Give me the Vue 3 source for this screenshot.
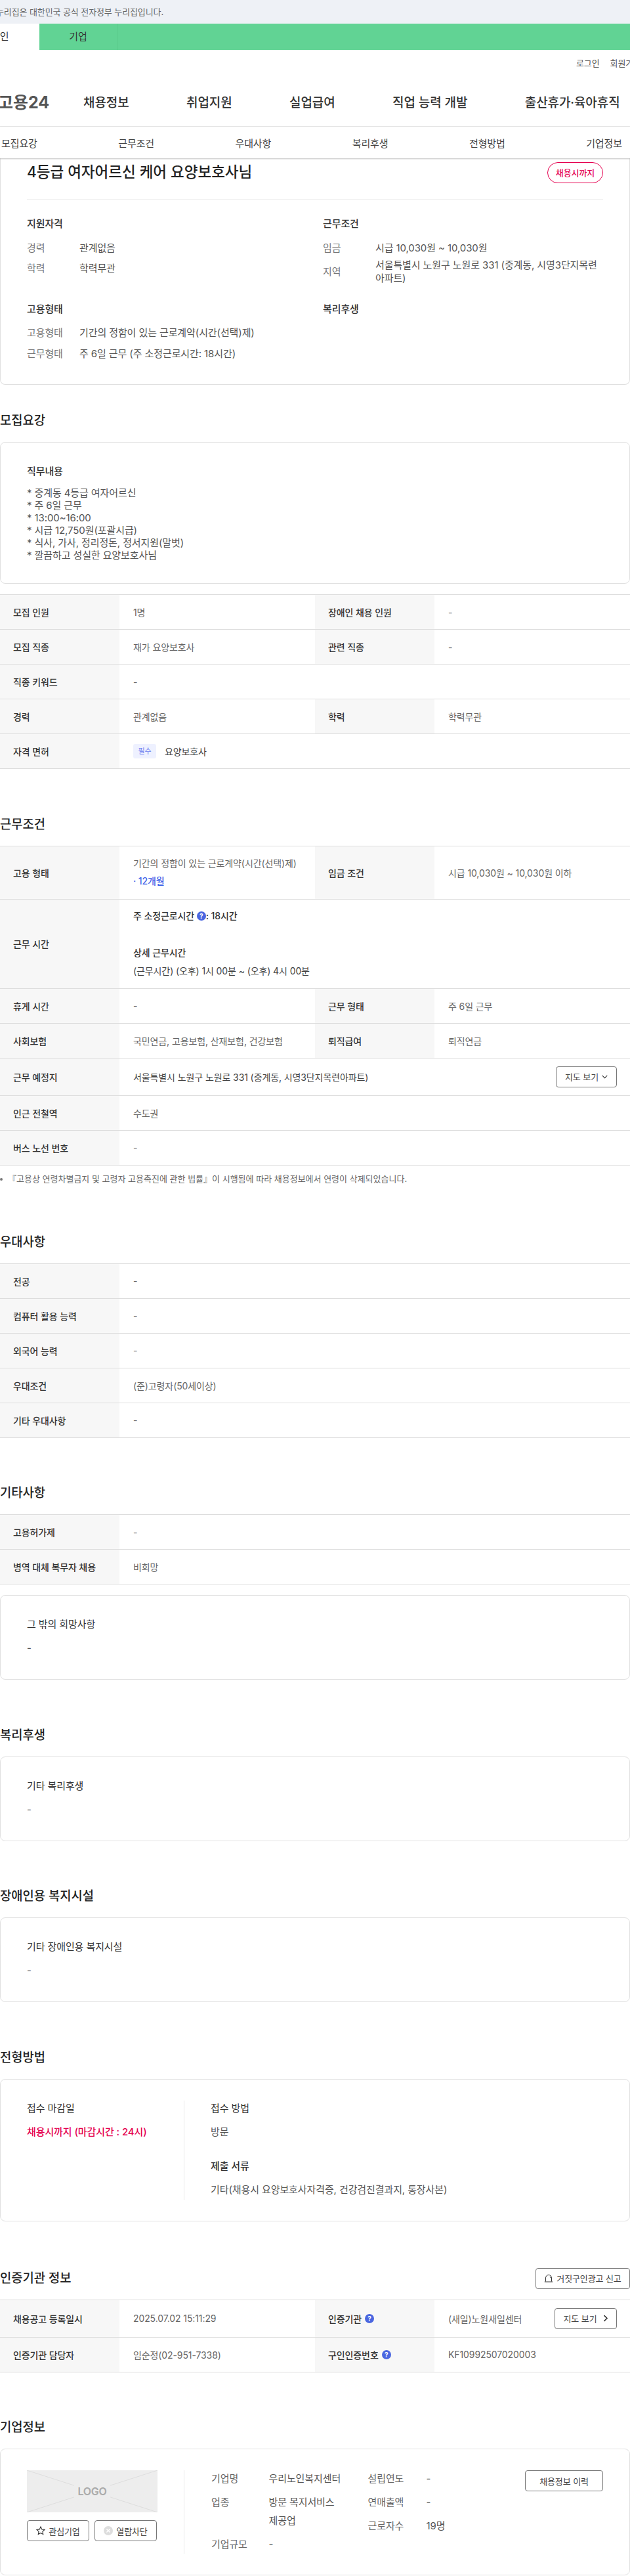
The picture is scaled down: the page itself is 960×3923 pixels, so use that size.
<script setup>
const recruitRows = [
  [{ k: '모집 인원', v: '1명' }, { k: '장애인 채용 인원', v: '-' }],
  [{ k: '모집 직종', v: '재가 요양보호사' }, { k: '관련 직종', v: '-' }],
  [{ k: '직종 키워드', v: '-' }],
  [{ k: '경력', v: '관계없음' }, { k: '학력', v: '학력무관' }]
]
const prefRows = [
  ['전공', '-'],
  ['컴퓨터 활용 능력', '-'],
  ['외국어 능력', '-'],
  ['우대조건', '(준)고령자(50세이상)'],
  ['기타 우대사항', '-']
]
const jobLines = [
  '중계동 4등급 여자어르신',
  '주 6일 근무',
  '13:00~16:00',
  '시급 12,750원(포괄시급)',
  '식사, 가사, 정리정돈, 정서지원(말벗)',
  '깔끔하고 성실한 요양보호사님'
]
const subTabs = ['모집요강', '근무조건', '우대사항', '복리후생', '전형방법', '기업정보']
const navItems = ['채용정보', '취업지원', '실업급여', '직업 능력 개발', '출산휴가·육아휴직']
</script>

<template>
  <div class="page">
    <div class="govBar"><span>누리집은 대한민국 공식 전자정부 누리집입니다.</span></div>
    <div class="userTabs">
      <div class="tabOn">개인</div>
      <div class="tabOff">기업</div>
    </div>
    <div class="utilLinks"><span>로그인</span><span>회원가입</span></div>
    <div class="mainNav">
      <div class="logo">고용24</div>
      <div v-for="item in navItems" :key="item" class="navItem">{{ item }}</div>
    </div>
    <div class="subTabs">
      <span v-for="item in subTabs" :key="item">{{ item }}</span>
    </div>

    <div class="card summary">
      <div class="summaryHead">
        <div class="jobTitle">4등급 여자어르신 케어 요양보호사님</div>
        <div class="deadline">채용시까지</div>
      </div>
      <div class="summaryGrid">
        <div>
          <div class="sumTitle">지원자격</div>
          <div class="sumRow"><span>경력</span><p>관계없음</p></div>
          <div class="sumRow"><span>학력</span><p>학력무관</p></div>
        </div>
        <div>
          <div class="sumTitle">근무조건</div>
          <div class="sumRow"><span>임금</span><p>시급 10,030원 ~ 10,030원</p></div>
          <div class="sumRow"><span>지역</span><p class="twoLine">서울특별시 노원구 노원로 331 (중계동, 시영3단지목련아파트)</p></div>
        </div>
        <div class="sumLower">
          <div class="sumTitle">고용형태</div>
          <div class="sumRow"><span>고용형태</span><p>기간의 정함이 있는 근로계약(시간(선택)제)</p></div>
          <div class="sumRow"><span>근무형태</span><p>주 6일 근무 (주 소정근로시간: 18시간)</p></div>
        </div>
        <div class="sumLower">
          <div class="sumTitle">복리후생</div>
        </div>
      </div>
    </div>

    <h2 class="heading firstHeading">모집요강</h2>
    <div class="card jobCard">
      <div class="cardTitle strong">직무내용</div>
      <div class="jobText">
        <div v-for="line in jobLines" :key="line">* {{ line }}</div>
      </div>
    </div>
    <div class="table tableGap">
      <div v-for="(row, i) in recruitRows" :key="i" class="row">
        <template v-for="cell in row" :key="cell.k">
          <div class="th">{{ cell.k }}</div>
          <div class="td" :class="{ wide: row.length === 1 }">{{ cell.v }}</div>
        </template>
      </div>
      <div class="row">
        <div class="th">자격 면허</div>
        <div class="td wide dark"><span class="must">필수</span>요양보호사</div>
      </div>
    </div>

    <h2 class="heading">근무조건</h2>
    <div class="table">
      <div class="row">
        <div class="th">고용 형태</div>
        <div class="td stack">
          <div>기간의 정함이 있는 근로계약(시간(선택)제)</div>
          <div class="blue">· 12개월</div>
        </div>
        <div class="th">임금 조건</div>
        <div class="td">시급 10,030원 ~ 10,030원 이하</div>
      </div>
      <div class="row">
        <div class="th">근무 시간</div>
        <div class="td wide hours">
          <div class="hourTitle">주 소정근로시간 <i class="help">?</i>: 18시간</div>
          <div class="hourTitle second">상세 근무시간</div>
          <div>(근무시간) (오후) 1시 00분 ~ (오후) 4시 00분</div>
        </div>
      </div>
      <div class="row">
        <div class="th">휴게 시간</div><div class="td">-</div>
        <div class="th">근무 형태</div><div class="td">주 6일 근무</div>
      </div>
      <div class="row">
        <div class="th">사회보험</div><div class="td">국민연금, 고용보험, 산재보험, 건강보험</div>
        <div class="th">퇴직급여</div><div class="td">퇴직연금</div>
      </div>
      <div class="row tall">
        <div class="th">근무 예정지</div>
        <div class="td wide between">
          <span class="dark">서울특별시 노원구 노원로 331 (중계동, 시영3단지목련아파트)</span>
          <button class="btn mapBtn">지도 보기
            <svg width="9" height="6" viewBox="0 0 9 6"><path d="M.7.8 4.5 4.6 8.3.8" fill="none" stroke="#333" stroke-width="1.1"/></svg>
          </button>
        </div>
      </div>
      <div class="row">
        <div class="th">인근 전철역</div><div class="td wide">수도권</div>
      </div>
      <div class="row">
        <div class="th">버스 노선 번호</div><div class="td wide">-</div>
      </div>
    </div>
    <div class="note"><i class="dot"></i>『고용상 연령차별금지 및 고령자 고용촉진에 관한 법률』이 시행됨에 따라 채용정보에서 연령이 삭제되었습니다.</div>

    <h2 class="heading afterNote">우대사항</h2>
    <div class="table">
      <div v-for="row in prefRows" :key="row[0]" class="row">
        <div class="th">{{ row[0] }}</div>
        <div class="td wide">{{ row[1] }}</div>
      </div>
    </div>

    <h2 class="heading">기타사항</h2>
    <div class="table">
      <div class="row"><div class="th">고용허가제</div><div class="td wide">-</div></div>
      <div class="row"><div class="th">병역 대체 복무자 채용</div><div class="td wide">비희망</div></div>
    </div>
    <div class="card textCard otherCard">
      <div class="cardTitle">그 밖의 희망사항</div>
      <div class="dash">-</div>
    </div>

    <h2 class="heading">복리후생</h2>
    <div class="card textCard">
      <div class="cardTitle">기타 복리후생</div>
      <div class="dash">-</div>
    </div>

    <h2 class="heading">장애인용 복지시설</h2>
    <div class="card textCard">
      <div class="cardTitle">기타 장애인용 복지시설</div>
      <div class="dash">-</div>
    </div>

    <h2 class="heading">전형방법</h2>
    <div class="card methodCard">
      <div class="methodLeft">
        <div class="cardTitle">접수 마감일</div>
        <div class="red">채용시까지 (마감시간 : 24시)</div>
      </div>
      <div class="methodRight">
        <div class="cardTitle">접수 방법</div>
        <div class="dash">방문</div>
        <div class="cardTitle docs strong">제출 서류</div>
        <div class="dash">기타(채용시 요양보호사자격증, 건강검진결과지, 통장사본)</div>
      </div>
    </div>

    <div class="certHead">
      <h2 class="heading flat">인증기관 정보</h2>
      <button class="btn reportBtn">
        <svg width="14" height="13" viewBox="0 0 14 13"><path d="M2.5 11.5V6a4.5 4.5 0 0 1 9 0v5.5M.8 12h12.4M9 4.2c.6.5.9 1.1 1 1.8" fill="none" stroke="#333" stroke-width="1"/></svg>
        거짓구인광고 신고
      </button>
    </div>
    <div class="table">
      <div class="row tall">
        <div class="th">채용공고 등록일시</div>
        <div class="td">2025.07.02 15:11:29</div>
        <div class="th">인증기관<i class="help">?</i></div>
        <div class="td between">
          <span>(새일)노원새일센터</span>
          <button class="btn mapBtn mapRight">지도 보기
            <svg width="8" height="11" viewBox="0 0 8 11"><path d="M1.5 1.2 6 5.5l-4.5 4.3" fill="none" stroke="#333" stroke-width="1.6"/></svg>
          </button>
        </div>
      </div>
      <div class="row">
        <div class="th">인증기관 담당자</div>
        <div class="td">임순정(02-951-7338)</div>
        <div class="th">구인인증번호<i class="help">?</i></div>
        <div class="td">KF10992507020003</div>
      </div>
    </div>

    <h2 class="heading">기업정보</h2>
    <div class="card companyCard">
      <div class="companyLeft">
        <div class="logoBox">
          <svg class="logoLines" viewBox="0 0 199 64" preserveAspectRatio="none">
            <path d="M0 0 199 64M199 0 0 64" stroke="#ddd" stroke-width="1"/>
          </svg>
          <span>LOGO</span>
        </div>
        <div class="companyBtns">
          <button class="btn smallBtn">
            <svg width="14" height="14" viewBox="0 0 14 14"><path d="M7 1l1.8 3.9 4.2.5-3.1 2.9.8 4.2L7 10.4l-3.7 2.1.8-4.2L1 5.4l4.2-.5z" fill="none" stroke="#333" stroke-width="1.1"/></svg>
            관심기업
          </button>
          <button class="btn smallBtn">
            <svg width="14" height="14" viewBox="0 0 14 14"><circle cx="7" cy="7" r="7" fill="#ddd"/><path d="M4.4 4.4l5.2 5.2M9.6 4.4l-5.2 5.2" stroke="#fff" stroke-width="1.4"/></svg>
            열람차단
          </button>
        </div>
      </div>
      <div class="companyInfo">
        <div class="infoCol">
          <div class="infoRow"><span>기업명</span><p>우리노인복지센터</p></div>
          <div class="infoRow"><span>업종</span><p>방문 복지서비스<br>제공업</p></div>
          <div class="infoRow"><span>기업규모</span><p>-</p></div>
        </div>
        <div class="infoCol">
          <div class="infoRow"><span>설립연도</span><p>-</p></div>
          <div class="infoRow"><span>연매출액</span><p>-</p></div>
          <div class="infoRow"><span>근로자수</span><p>19명</p></div>
        </div>
      </div>
      <button class="btn historyBtn">채용정보 이력</button>
    </div>
  </div>
</template>

<style>
html, body { margin: 0; padding: 0; background: #fff; }
</style>

<style scoped>
.page {
  width: 960px;
  height: 3923px;
  overflow: hidden;
  font-family: Inter, "Noto Sans CJK KR", sans-serif;
  color: #555;
  font-size: 15px;
  letter-spacing: -0.1px;
}
p { margin: 0; }
i { font-style: normal; }
button { font-family: inherit; letter-spacing: inherit; cursor: pointer; }

.govBar {
  height: 36px;
  background: #eef1f6;
  color: #666;
  font-size: 13px;
  line-height: 36px;
  text-indent: -6px;
  white-space: nowrap;
}
.userTabs {
  height: 40px;
  background: #61d394;
  display: flex;
  line-height: 40px;
  color: #333;
}
.tabOn { width: 60px; background: #fff; text-indent: -14px; overflow: hidden; white-space: nowrap; }
.tabOff { width: 119px; text-align: center; border-right: 1px solid #58c88a; box-sizing: border-box; }
.utilLinks {
  height: 40px;
  display: flex;
  gap: 16px;
  padding-left: 878px;
  font-size: 13px;
  line-height: 40px;
  white-space: nowrap;
}
.mainNav {
  height: 76px;
  display: flex;
  align-items: center;
  border-bottom: 1px solid #e8e8e8;
  color: #333;
  font-size: 19px;
  font-weight: 500;
  white-space: nowrap;
}
.logo { font-size: 25px; font-weight: 700; margin-left: -3px; width: 130px; color: #555; letter-spacing: 0; }
.navItem { margin-right: 87.5px; }
.navItem:last-child { margin-right: 0; }
.subTabs {
  height: 48px;
  display: flex;
  justify-content: space-between;
  align-items: center;
  padding: 0 12px 0 2px;
  color: #444;
  box-shadow: 0 1px 2px rgba(0, 0, 0, 0.25);
  position: relative;
  background: #fff;
}

.card { border: 1px solid #e0e0e0; border-radius: 8px; box-sizing: border-box; width: 960px; }
.summary {
  border-top: none;
  border-radius: 0 0 8px 8px;
  height: 345px;
  padding: 0 40px;
}
.summaryHead {
  height: 62px;
  display: flex;
  justify-content: space-between;
  border-bottom: 1px solid #eee;
}
.jobTitle { font-size: 22.5px; font-weight: 500; color: #222; line-height: 42px; letter-spacing: 0; }
.deadline {
  margin-top: 6px;
  width: 85px;
  height: 32px;
  border: 1px solid #e5004f;
  border-radius: 16px;
  box-sizing: border-box;
  color: #e5004f;
  text-align: center;
  font-size: 13px;
  font-weight: 500;
  line-height: 30px;
}
.summaryGrid { display: grid; grid-template-columns: 451px 1fr; padding-top: 25px; }
.sumLower { padding-top: 25px; }
.sumTitle { font-weight: 500; color: #333; line-height: 24px; margin-bottom: 9px; }
.sumRow { display: flex; align-items: center; min-height: 31.5px; line-height: 20px; }
.sumRow span { width: 80px; flex: none; color: #777; }
.twoLine { width: 348px; }

.heading {
  margin: 0 0 16px;
  padding-top: 68.5px;
  height: 32px;
  font-size: 18.75px;
  font-weight: 500;
  line-height: 32px;
  color: #222;
  letter-spacing: 0;
}
.firstHeading { padding-top: 39px; }
.afterNote { padding-top: 71px; }
.flat { padding: 0; margin: 0; }

.jobCard { height: 216px; padding: 34px 40px 0; }
.tableGap { margin-top: 16px; }
.cardTitle { line-height: 20px; color: #333; }
.strong { font-weight: 500; }
.jobText { margin-top: 12.5px; line-height: 19px; }

.table { border-top: 1px solid #ddd; }
.row {
  display: flex;
  min-height: 52px;
  border-bottom: 1px solid #ddd;
  font-size: 14px;
}
.tall { min-height: 56px; }
.th {
  width: 182px;
  flex: none;
  box-sizing: border-box;
  padding-left: 20px;
  background: #f7f7f7;
  color: #333;
  font-weight: 500;
  display: flex;
  align-items: center;
  gap: 5px;
}
.td {
  width: 298px;
  flex: none;
  box-sizing: border-box;
  padding: 0 20px 0 21px;
  display: flex;
  align-items: center;
  color: #666;
  white-space: nowrap;
}
.wide { width: 778px; }
.dark { color: #444; }
.between { justify-content: space-between; }
.must {
  width: 35px;
  height: 22px;
  background: #eef1ff;
  color: #6a80f0;
  border-radius: 3px;
  font-size: 11px;
  line-height: 22px;
  text-align: center;
  margin-right: 13px;
}
.stack { flex-direction: column; align-items: flex-start; justify-content: center; gap: 5.5px; min-height: 80px; line-height: 22px; }
.blue { color: #3f63e8; font-weight: 500; }
.hours { flex-direction: column; align-items: flex-start; padding-top: 14px; padding-bottom: 15px; color: #444; line-height: 22px; gap: 6px; }
.hourTitle { color: #333; font-weight: 500; }
.second { margin-top: 28px; }
.help {
  display: inline-block;
  width: 14px;
  height: 14px;
  border-radius: 50%;
  background: #4a66e0;
  color: #fff;
  font-size: 10px;
  line-height: 14px;
  text-align: center;
  font-weight: 700;
  vertical-align: 1px;
  letter-spacing: 0;
}
.btn {
  background: #fff;
  border: 1px solid #777;
  border-radius: 4px;
  color: #444;
  font-size: 13px;
  display: inline-flex;
  align-items: center;
  justify-content: center;
  gap: 5px;
  padding: 0;
  box-sizing: border-box;
  white-space: nowrap;
}
.mapBtn { width: 93px; height: 32px; }
.mapRight { width: 95px; gap: 9px; }
.note { font-size: 13px; color: #666; line-height: 20px; margin-top: 10px; letter-spacing: 0; }
.dot { display: inline-block; width: 4px; height: 4px; border-radius: 50%; background: #777; margin-right: 8px; vertical-align: 2px; }

.textCard { height: 129px; padding: 34px 40px 0; }
.otherCard { margin-top: 16px; }
.dash { margin-top: 16px; line-height: 20px; }

.methodCard { height: 217px; padding: 32px 40px 0; display: flex; }
.methodLeft { width: 240px; height: 151px; border-right: 1px solid #e8e8e8; padding-top: 2.5px; box-sizing: border-box; }
.methodRight { padding: 2.5px 0 0 40px; }
.red { color: #e5004f; font-weight: 500; margin-top: 16px; line-height: 20px; }
.docs { margin-top: 32px; }

.certHead { display: flex; justify-content: space-between; align-items: flex-end; padding-top: 71px; margin-bottom: 16px; }
.reportBtn { width: 144px; height: 32px; }

.companyCard { height: 193px; padding: 32px 40px 0; display: flex; position: relative; }
.companyLeft { width: 240px; height: 127px; border-right: 1px solid #e8e8e8; box-sizing: border-box; flex: none; }
.logoBox {
  position: relative;
  width: 199px;
  height: 64px;
  background: #ededed;
  display: flex;
  align-items: center;
  justify-content: center;
  color: #aaa;
  font-size: 16px;
  letter-spacing: -0.3px;
}
.logoLines { position: absolute; left: 0; top: 0; width: 100%; height: 100%; }
.logoBox span { position: relative; background: #ededed; padding: 6px 6px; font-weight: 600; }
.companyBtns { display: flex; gap: 8px; margin-top: 12px; }
.smallBtn { width: 95px; height: 32px; }
.companyInfo { display: flex; padding-left: 41px; margin-top: -1px; }
.infoCol { width: 238.5px; }
.infoRow { display: flex; line-height: 28px; margin-bottom: 8px; }
.infoRow span { width: 87.5px; flex: none; color: #666; }
.infoCol + .infoCol .infoRow span { width: 89px; }
.historyBtn { position: absolute; right: 40px; top: 32px; width: 119px; height: 32px; }
</style>
